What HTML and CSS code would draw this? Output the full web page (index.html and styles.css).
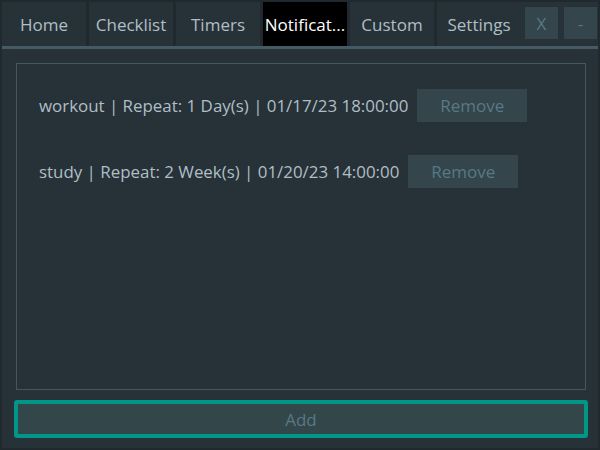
FILE: index.html
```html
<!DOCTYPE html>
<html>
<head>
<meta charset="utf-8">
<link rel="stylesheet" href="styles.css">
</head>
<body>
<div class="app">
  <div class="tabbar">
    <div class="tabs">
      <div class="tab">Home</div>
      <div class="tab">Checklist</div>
      <div class="tab">Timers</div>
      <div class="tab active">Notificat...</div>
      <div class="tab">Custom</div>
      <div class="tab">Settings</div>
    </div>
    <div class="winbtns">
      <div class="winbtn">X</div>
      <div class="winbtn">-</div>
    </div>
  </div>
  <div class="tabline"></div>
  <div class="main">
    <div class="panel">
      <div class="row">
        <span class="label">workout | Repeat: 1 Day(s) | 01/17/23 18:00:00</span>
        <button class="remove">Remove</button>
      </div>
      <div class="row">
        <span class="label">study | Repeat: 2 Week(s) | 01/20/23 14:00:00</span>
        <button class="remove">Remove</button>
      </div>
    </div>
    <button class="add">Add</button>
  </div>
</div>
</body>
</html>
```

FILE: styles.css
```css
* { box-sizing: border-box; }
html, body {
  margin: 0;
  padding: 0;
  width: 600px;
  height: 450px;
  overflow: hidden;
  background: #1f292e;
  font-family: "Open Sans", "Noto Sans", sans-serif;
}
.app {
  width: 600px;
  height: 450px;
  padding: 0 2px 2px 2px;
  display: flex;
  flex-direction: column;
  background: #1f292e;
}
.tabbar {
  height: 46px;
  display: flex;
  align-items: flex-start;
  justify-content: space-between;
  padding-top: 2px;
}
.tabs {
  display: flex;
  gap: 3px;
  height: 44px;
}
.tab {
  width: 84px;
  height: 44px;
  background: #263238;
  color: #b0bec5;
  font-size: 17px;
  display: flex;
  align-items: center;
  justify-content: center;
  white-space: nowrap;
}
.tab.active {
  background: #000;
  color: #fff;
}
.winbtns {
  display: flex;
  gap: 6px;
  padding-top: 5px;
  padding-right: 1px;
  background: #263238;
  height: 44px;
  padding-left: 4px;
}
.winbtn {
  width: 33px;
  height: 32px;
  background: #34454b;
  color: #587985;
  font-size: 17px;
  display: flex;
  align-items: center;
  justify-content: center;
}
.tabline {
  height: 3px;
  background: #455a64;
}
.main {
  flex: 1;
  background: #263238;
  padding: 14px 10px 10px 12px;
  display: flex;
  flex-direction: column;
  gap: 10px;
}
.panel {
  flex: 1;
  border: 1px solid #46565f;
  margin: 0 2px;
  padding: 25px 0 0 22px;
  display: flex;
  flex-direction: column;
  gap: 33px;
}
.row {
  display: flex;
  align-items: center;
  gap: 9px;
  height: 33px;
}
.label {
  color: #b0bec5;
  font-size: 16.9px;
  white-space: nowrap;
}
.remove {
  width: 110px;
  height: 33px;
  border: none;
  background: #34454b;
  color: #587985;
  font-family: inherit;
  font-size: 17px;
  padding: 0;
}
.add {
  height: 38px;
  border: 4px solid #009688;
  border-radius: 3px;
  background: #33464a;
  color: #587985;
  font-family: inherit;
  font-size: 17px;
  padding: 0;
}
```
